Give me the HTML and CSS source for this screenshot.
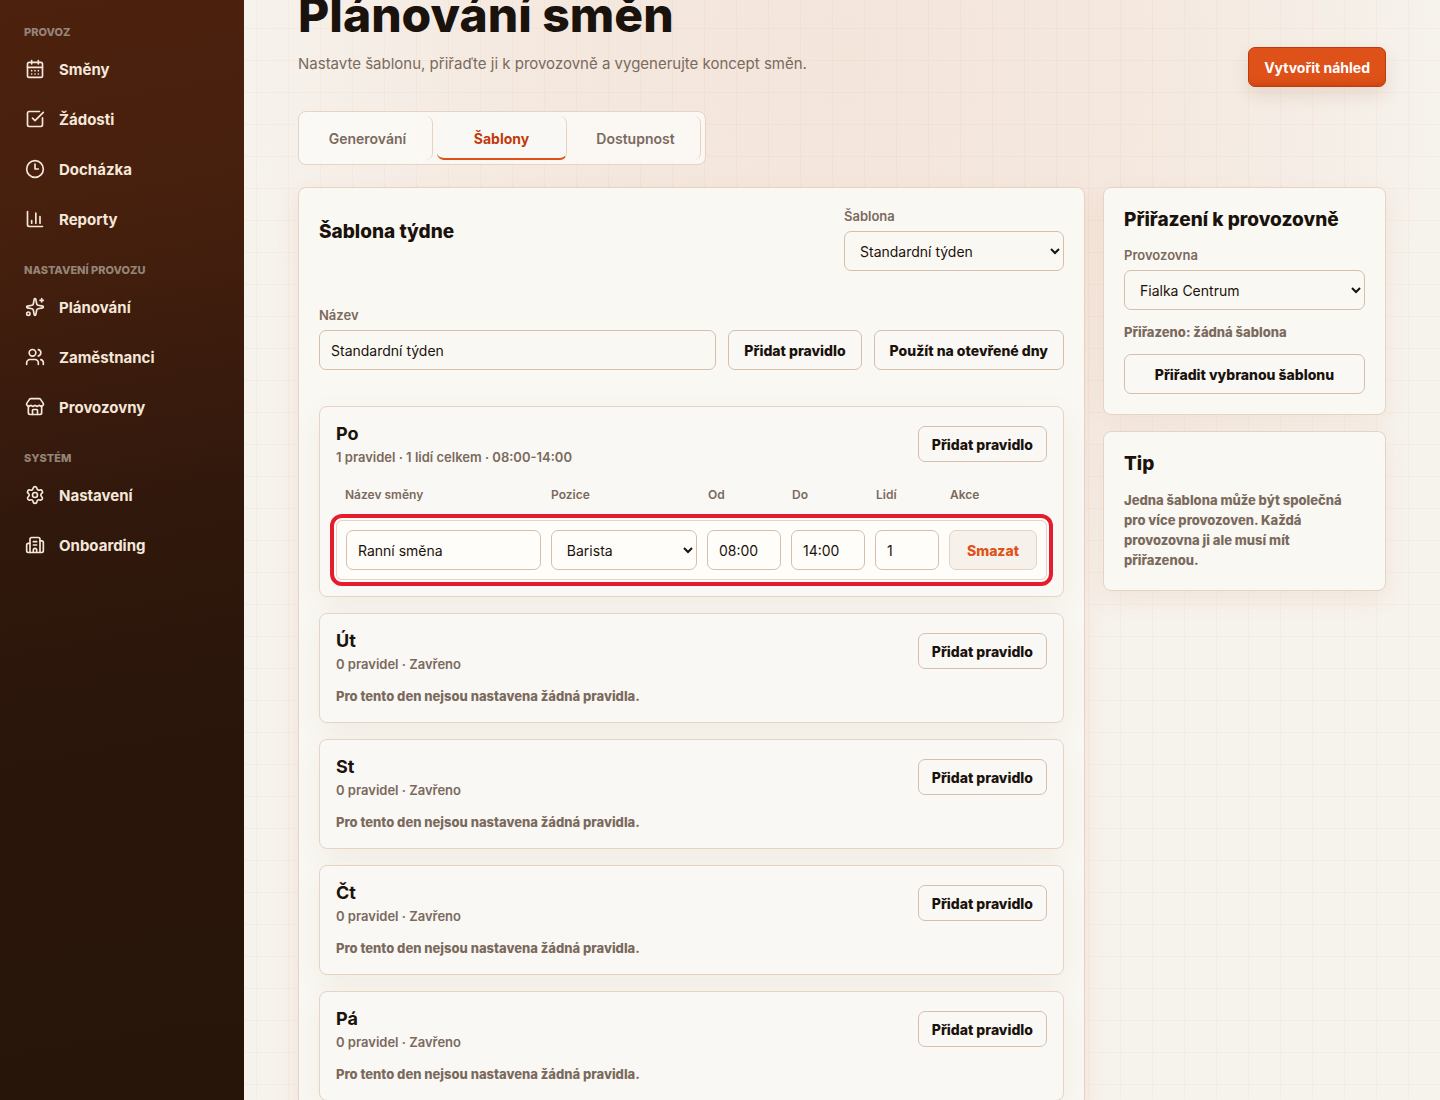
FILE: index.html
```html
<!DOCTYPE html>
<html lang="cs">
<head>
<meta charset="utf-8">
<meta name="viewport" content="width=device-width, initial-scale=1">
<title>Plánování směn</title>
<link rel="stylesheet" href="styles.css">
</head>
<body>
<div class="app">
  <aside class="sidebar">
    <nav class="nav" aria-label="Hlavní navigace">
      <section class="nav-group">
        <h2 class="nav-title">Provoz</h2>
        <a class="nav-link" href="#smeny"><svg class="icon" viewBox="0 0 24 24"><path d="M8 2v4M16 2v4M3 10h18M8 14h.01M12 14h.01M16 14h.01M8 18h.01M12 18h.01M16 18h.01"/><rect width="18" height="18" x="3" y="4" rx="2"/></svg>Směny</a>
        <a class="nav-link" href="#zadosti"><svg class="icon" viewBox="0 0 24 24"><path d="M21 10.656V19a2 2 0 0 1-2 2H5a2 2 0 0 1-2-2V5a2 2 0 0 1 2-2h12.344"/><path d="m9 11 3 3L22 4"/></svg>Žádosti</a>
        <a class="nav-link" href="#dochazka"><svg class="icon" viewBox="0 0 24 24"><circle cx="12" cy="12" r="10"/><path d="M12 6v6h4"/></svg>Docházka</a>
        <a class="nav-link" href="#reporty"><svg class="icon" viewBox="0 0 24 24"><path d="M3 3v16a2 2 0 0 0 2 2h16M18 17V9M13 17V5M8 17v-3"/></svg>Reporty</a>
      </section>
      <section class="nav-group">
        <h2 class="nav-title">Nastavení provozu</h2>
        <a class="nav-link" href="#planovani"><svg class="icon" viewBox="0 0 24 24"><path d="M11.017 2.814a1 1 0 0 1 1.966 0l1.051 5.558a2 2 0 0 0 1.594 1.594l5.558 1.051a1 1 0 0 1 0 1.966l-5.558 1.051a2 2 0 0 0-1.594 1.594l-1.051 5.558a1 1 0 0 1-1.966 0l-1.051-5.558a2 2 0 0 0-1.594-1.594l-5.558-1.051a1 1 0 0 1 0-1.966l5.558-1.051a2 2 0 0 0 1.594-1.594zM20 2v4M22 4h-4"/><circle cx="4" cy="20" r="2"/></svg>Plánování</a>
        <a class="nav-link" href="#zamestnanci"><svg class="icon" viewBox="0 0 24 24"><path d="M16 21v-2a4 4 0 0 0-4-4H6a4 4 0 0 0-4 4v2M16 3.128a4 4 0 0 1 0 7.744M22 21v-2a4 4 0 0 0-3-3.87"/><circle cx="9" cy="7" r="4"/></svg>Zaměstnanci</a>
        <a class="nav-link" href="#provozovny"><svg class="icon" viewBox="0 0 24 24"><path d="M15 21v-5a1 1 0 0 0-1-1h-4a1 1 0 0 0-1 1v5"/><path d="M17.774 10.31a1.12 1.12 0 0 0-1.549 0 2.5 2.5 0 0 1-3.451 0 1.12 1.12 0 0 0-1.548 0 2.5 2.5 0 0 1-3.452 0 1.12 1.12 0 0 0-1.549 0 2.5 2.5 0 0 1-3.77-3.248l2.889-4.184A2 2 0 0 1 7 2h10a2 2 0 0 1 1.653.873l2.895 4.192a2.5 2.5 0 0 1-3.774 3.244"/><path d="M4 10.95V19a2 2 0 0 0 2 2h12a2 2 0 0 0 2-2v-8.05"/></svg>Provozovny</a>
      </section>
      <section class="nav-group">
        <h2 class="nav-title">Systém</h2>
        <a class="nav-link" href="#nastaveni"><svg class="icon" viewBox="0 0 24 24"><path d="M9.671 4.136a2.34 2.34 0 0 1 4.659 0 2.34 2.34 0 0 0 3.319 1.915 2.34 2.34 0 0 1 2.33 4.033 2.34 2.34 0 0 0 0 3.831 2.34 2.34 0 0 1-2.33 4.033 2.34 2.34 0 0 0-3.319 1.915 2.34 2.34 0 0 1-4.659 0 2.34 2.34 0 0 0-3.32-1.915 2.34 2.34 0 0 1-2.33-4.033 2.34 2.34 0 0 0 0-3.831A2.34 2.34 0 0 1 6.35 6.051a2.34 2.34 0 0 0 3.319-1.915"/><circle cx="12" cy="12" r="3"/></svg>Nastavení</a>
        <a class="nav-link" href="#onboarding"><svg class="icon" viewBox="0 0 24 24"><path d="M10 12h4M10 8h4M14 21v-3a2 2 0 0 0-4 0v3M6 10H4a2 2 0 0 0-2 2v7a2 2 0 0 0 2 2h16a2 2 0 0 0 2-2V9a2 2 0 0 0-2-2h-2"/><path d="M6 21V5a2 2 0 0 1 2-2h8a2 2 0 0 1 2 2v16"/></svg>Onboarding</a>
      </section>
    </nav>
  </aside>

  <main class="main">
    <header class="page-head">
      <div>
        <h1 class="page-title">Plánování směn</h1>
        <p class="page-lead">Nastavte šablonu, přiřaďte ji k provozovně a vygenerujte koncept směn.</p>
      </div>
      <button class="btn btn-primary" type="button">Vytvořit náhled</button>
    </header>

    <div class="tabs" role="tablist">
      <button class="tab" type="button" role="tab" aria-selected="false">Generování</button>
      <button class="tab tab-active" type="button" role="tab" aria-selected="true">Šablony</button>
      <button class="tab" type="button" role="tab" aria-selected="false">Dostupnost</button>
    </div>

    <div class="columns">
      <section class="panel template">
        <div class="template-head">
          <h2 class="panel-title">Šablona týdne</h2>
          <div class="field template-pick">
            <label class="label" for="template">Šablona</label>
            <select class="control select" id="template"><option>Standardní týden</option></select>
          </div>
        </div>

        <div class="template-name">
          <div class="field name-field">
            <label class="label" for="name">Název</label>
            <input class="control" id="name" type="text" value="Standardní týden">
          </div>
          <button class="btn" type="button">Přidat pravidlo</button>
          <button class="btn" type="button">Použít na otevřené dny</button>
        </div>

        <div class="days">
          <article class="day">
            <div class="day-head">
              <div class="day-info">
                <h3 class="day-name">Po</h3>
                <p class="day-meta">1 pravidel · 1 lidí celkem · 08:00-14:00</p>
              </div>
              <button class="btn btn-small" type="button">Přidat pravidlo</button>
            </div>
            <div class="rules">
              <div class="rule-grid rule-labels">
                <label for="shift">Název směny</label>
                <label for="position">Pozice</label>
                <label for="from">Od</label>
                <label for="to">Do</label>
                <label for="people">Lidí</label>
                <span>Akce</span>
              </div>
              <div class="rule-grid rule">
                <input class="control" id="shift" type="text" value="Ranní směna">
                <select class="control select" id="position"><option>Barista</option></select>
                <input class="control" id="from" type="text" value="08:00">
                <input class="control" id="to" type="text" value="14:00">
                <input class="control" id="people" type="text" inputmode="numeric" value="1">
                <button class="btn btn-danger" type="button">Smazat</button>
              </div>
            </div>
          </article>

          <article class="day">
            <div class="day-head">
              <div class="day-info">
                <h3 class="day-name">Út</h3>
                <p class="day-meta">0 pravidel · Zavřeno</p>
              </div>
              <button class="btn btn-small" type="button">Přidat pravidlo</button>
            </div>
            <p class="note">Pro tento den nejsou nastavena žádná pravidla.</p>
          </article>

          <article class="day">
            <div class="day-head">
              <div class="day-info">
                <h3 class="day-name">St</h3>
                <p class="day-meta">0 pravidel · Zavřeno</p>
              </div>
              <button class="btn btn-small" type="button">Přidat pravidlo</button>
            </div>
            <p class="note">Pro tento den nejsou nastavena žádná pravidla.</p>
          </article>

          <article class="day">
            <div class="day-head">
              <div class="day-info">
                <h3 class="day-name">Čt</h3>
                <p class="day-meta">0 pravidel · Zavřeno</p>
              </div>
              <button class="btn btn-small" type="button">Přidat pravidlo</button>
            </div>
            <p class="note">Pro tento den nejsou nastavena žádná pravidla.</p>
          </article>

          <article class="day">
            <div class="day-head">
              <div class="day-info">
                <h3 class="day-name">Pá</h3>
                <p class="day-meta">0 pravidel · Zavřeno</p>
              </div>
              <button class="btn btn-small" type="button">Přidat pravidlo</button>
            </div>
            <p class="note">Pro tento den nejsou nastavena žádná pravidla.</p>
          </article>
        </div>
      </section>

      <div class="side">
        <section class="panel assign">
          <h2 class="panel-title">Přiřazení k provozovně</h2>
          <div class="field">
            <label class="label" for="site">Provozovna</label>
            <select class="control select" id="site"><option>Fialka Centrum</option></select>
          </div>
          <p class="note">Přiřazeno: žádná šablona</p>
          <button class="btn" type="button">Přiřadit vybranou šablonu</button>
        </section>
        <section class="panel tip">
          <h2 class="panel-title">Tip</h2>
          <p class="note">Jedna šablona může být společná pro více provozoven. Každá provozovna ji ale musí mít přiřazenou.</p>
        </section>
      </div>
    </div>
  </main>
</div>
</body>
</html>
```
FILE: styles.css
```css
:root {
  --ink: #1a120c;
  --muted: #7a6a5d;
  --line: #e6d3c4;
  --line-strong: #d6bdac;
  --surface: #faf8f4;
  --canvas: #f6f2ec;
  --accent: #de521a;
  --accent-dark: #bf3a0c;
}

* {
  box-sizing: border-box;
}

body,
h1,
h2,
h3,
p {
  margin: 0;
}

body {
  background: var(--canvas);
  color: var(--ink);
  font-family: Inter, "Liberation Sans", sans-serif;
  font-size: 14px;
  -webkit-font-smoothing: antialiased;
}

button,
input,
select {
  font: inherit;
  color: inherit;
}

.app {
  display: grid;
  grid-template-columns: 244px minmax(0, 1fr);
  min-height: 100vh;
}

/* Sidebar */

.sidebar {
  background: linear-gradient(170deg, #4c210e 0, #48200e 200px, #31180c 520px, #29150a 760px, #28150a 1100px);
}

.nav {
  display: flex;
  flex-direction: column;
  gap: 22px;
  padding: 25px 16px;
}

.nav-group {
  display: flex;
  flex-direction: column;
  gap: 6px;
}

.nav-title {
  padding: 0 8px;
  margin-bottom: 2px;
  color: #958578;
  font-size: 11px;
  font-weight: 800;
  line-height: 14px;
  text-transform: uppercase;
}

.nav-link {
  display: flex;
  align-items: center;
  gap: 14px;
  height: 44px;
  padding: 0 9px;
  color: #f5e8db;
  font-size: 15px;
  font-weight: 700;
  text-decoration: none;
}

.icon {
  width: 20px;
  height: 20px;
  fill: none;
  stroke: currentColor;
  stroke-width: 2;
  stroke-linecap: round;
  stroke-linejoin: round;
}

/* Main area */

.main {
  padding: 0 54px 24px;
  background:
    linear-gradient(to right, rgba(222, 82, 26, 0.045) 1px, transparent 1px) 12px 0 / 32px 32px,
    linear-gradient(to bottom, rgba(222, 82, 26, 0.04) 1px, transparent 1px) 0 28px / 32px 32px,
    radial-gradient(ellipse 600px 640px at 600px 60px, rgba(222, 100, 50, 0.09), rgba(222, 100, 50, 0.07) 50%, transparent);
}

.page-head {
  display: flex;
  align-items: flex-end;
  justify-content: space-between;
  height: 87px;
}

.page-head > div {
  align-self: flex-start;
}

.page-title {
  font-size: 48px;
  font-weight: 800;
  line-height: 30px;
}

.page-lead {
  margin-top: 22px;
  color: var(--muted);
  font-size: 15px;
  line-height: 24px;
}

.btn {
  height: 40px;
  padding: 0 15px;
  border: 1px solid var(--line-strong);
  border-radius: 7px;
  background: var(--surface);
  font-weight: 800;
  white-space: nowrap;
}

.btn-small {
  height: 36px;
  padding: 0 13px;
}

.btn-primary {
  border-color: var(--accent-dark);
  background: var(--accent);
  color: #fff;
  font-weight: 700;
  box-shadow: inset 0 -8px 8px -8px var(--accent-dark), 0 8px 18px rgba(120, 60, 20, 0.12);
}

.btn-danger {
  padding: 0;
  border-color: var(--line);
  background: #f6f2eb;
  color: var(--accent);
}

.tabs {
  display: grid;
  grid-template-columns: repeat(3, 130px);
  gap: 4px;
  width: fit-content;
  margin: 24px 0 22px;
  padding: 4px;
  border: 1px solid var(--line);
  border-radius: 8px;
  background: rgba(252, 251, 248, 0.8);
}

.tab {
  height: 44px;
  padding: 0;
  border: 0;
  border-right: 1px solid var(--line);
  border-radius: 7px;
  background: transparent;
  color: var(--muted);
  font-weight: 600;
}

.tab-active {
  padding-top: 2px;
  border-bottom: 2px solid var(--accent);
  background: var(--surface);
  color: var(--accent-dark);
  font-weight: 700;
}

.columns {
  display: grid;
  grid-template-columns: minmax(0, 1fr) 283px;
  align-items: start;
  gap: 18px;
}

.panel {
  padding: 20px;
  border: 1px solid var(--line);
  border-radius: 8px;
  background: #faf8f3;
  box-shadow: 0 8px 24px rgba(190, 90, 30, 0.08);
}

.panel-title {
  font-size: 19px;
  font-weight: 800;
  line-height: 24px;
}

.field {
  display: grid;
  gap: 7px;
}

.label {
  color: var(--muted);
  font-size: 13px;
  font-weight: 600;
  line-height: 16px;
}

.control {
  width: 100%;
  min-width: 0;
  height: 40px;
  padding: 0 11px;
  border: 1px solid var(--line-strong);
  border-radius: 7px;
  background: transparent;
}

.select {
  padding-right: 0;
}

.note {
  color: var(--muted);
  font-size: 13px;
  font-weight: 800;
  line-height: 20px;
}

/* Template editor */

.template-head {
  display: flex;
  align-items: flex-start;
  justify-content: space-between;
  margin-bottom: 36px;
}

.template-head .panel-title {
  margin-top: 12px;
}

.template-pick {
  width: 220px;
}

.template-name {
  display: flex;
  align-items: flex-end;
  gap: 12px;
  margin-bottom: 36px;
}

.name-field {
  flex: 1;
}

.days {
  display: grid;
  gap: 16px;
}

.day {
  display: grid;
  gap: 14px;
  padding: 16px;
  border: 1px solid var(--line);
  border-radius: 8px;
  background: var(--surface);
  box-shadow: 0 10px 30px rgba(120, 80, 30, 0.07);
}

.day-head {
  display: flex;
  align-items: center;
  justify-content: space-between;
}

.day-info {
  display: grid;
  gap: 4px;
}

.day-name {
  font-size: 18px;
  font-weight: 700;
  line-height: 22px;
}

.day-meta {
  color: var(--muted);
  font-size: 13px;
  font-weight: 600;
  line-height: 16px;
}

.rules {
  display: grid;
  gap: 9px;
}

.rule-grid {
  display: grid;
  grid-template-columns: minmax(0, 4fr) minmax(0, 3fr) 74px 74px 64px 88px;
  gap: 10px;
}

.rule-labels {
  padding: 8px 9px;
  color: var(--muted);
  font-size: 12px;
  font-weight: 600;
  line-height: 16px;
}

.rule {
  padding: 9px;
  border: 1px solid var(--line);
  border-radius: 6px;
  background: #fffdf9;
  box-shadow: 0 0 0 2px #fffdf9;
  outline: 4px solid #e51b2e;
  outline-offset: 2px;
}

/* Side column */

.side {
  display: grid;
  gap: 16px;
}

.assign {
  display: grid;
  gap: 12px;
}

.assign .field {
  margin-top: 3px;
}

.tip {
  display: grid;
  gap: 14px;
}
```
